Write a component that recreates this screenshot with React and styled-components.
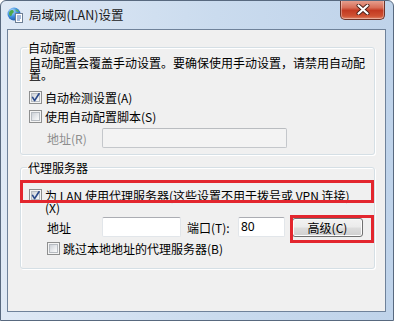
import React from 'react';
import styled, { createGlobalStyle } from 'styled-components';

const Global = createGlobalStyle`
  html, body { margin: 0; padding: 0; background: #ffffff; }
  body { font-family: "Noto Sans CJK SC", "Noto Sans", sans-serif; font-size: 12px; color: #000; }
`;

const Window = styled.div`
  width: 394px;
  height: 321px;
  box-sizing: border-box;
  border: 1px solid #58697f;
  border-radius: 6px 6px 0 0;
  background: linear-gradient(to right, #dfe9f5 0%, #cadbee 55%, #bfd3ea 100%);
  display: flex;
  flex-direction: column;
  overflow: hidden;
`;

const TitleBar = styled.div`
  height: 28px;
  flex: none;
  display: flex;
  align-items: flex-start;
`;

const AppIcon = styled.svg`
  margin: 6px 0 0 6px;
  width: 16px;
  height: 16px;
  flex: none;
`;

const Title = styled.div`
  margin: 6px 0 0 6px;
  font-size: 12.5px;
  line-height: 15px;
  color: #1a1a1a;
  white-space: nowrap;
`;

const CloseButton = styled.div`
  margin: -1px 8px 0 auto;
  width: 45px;
  height: 20px;
  box-sizing: border-box;
  border: 1px solid #6e3328;
  border-top: none;
  border-radius: 0 0 5px 5px;
  background: linear-gradient(#e8a595 0%, #d86e58 40%, #c33a22 55%, #cf5233 85%, #e0876c 100%);
  box-shadow: inset 0 0 0 1px rgba(255, 255, 255, 0.35);
  display: flex;
  align-items: center;
  justify-content: center;
`;

const Client = styled.div`
  flex: 1;
  margin: 0 7px 8px 6px;
  border: 1px solid #6f829a;
  background: #f0f0f0;
  position: relative;
  display: flex;
  flex-direction: column;
`;

const Group = styled.fieldset`
  margin: ${(p) => p.$top}px 0 0 12px;
  width: 355px;
  box-sizing: border-box;
  min-width: 0;
  border: 1px solid #d5dfe5;
  border-radius: 3px;
  box-shadow: inset 1px 1px 0 #ffffff, 1px 1px 0 #ffffff;
  padding: 0 8px ${(p) => p.$bottom}px 8px;
`;

const Caption = styled.legend`
  padding: 0 1px;
  margin-left: -2px;
  font-size: 12px;
  line-height: 13px;
`;

const Description = styled.div`
  margin-top: 3px;
  line-height: 12px;
`;

const CheckRow = styled.div`
  display: flex;
  align-items: flex-start;
  gap: 3px;
  margin-top: ${(p) => p.$top}px;
  padding-left: ${(p) => p.$indent || 0}px;
`;

const Box = styled.span`
  position: relative;
  width: 13px;
  height: 13px;
  box-sizing: border-box;
  flex: none;
  border: 1px solid #8e8f8f;
  background: #f4f4f4;
  padding: 1px;
  display: flex;
  &::before {
    content: '';
    flex: 1;
    border: 1px solid #b6bbc1;
    background: linear-gradient(135deg, #cdd1d7 0%, #eef0f2 70%, #fafafa 100%);
  }
`;

const Tick = styled.svg`
  position: absolute;
  left: 0;
  top: 0;
  width: 11px;
  height: 11px;
`;

const CheckText = styled.span`
  line-height: 12px;
  padding-top: 1px;
`;

const FieldRow = styled.div`
  display: flex;
  align-items: center;
  margin-top: ${(p) => p.$top}px;
  padding-left: 18px;
`;

const FieldLabel = styled.span`
  width: ${(p) => p.$w}px;
  margin-left: ${(p) => p.$ml || 0}px;
  flex: none;
  line-height: 13px;
  white-space: nowrap;
  color: ${(p) => (p.$disabled ? '#8d8d8d' : '#000')};
`;

const Input = styled.div`
  width: ${(p) => p.$w}px;
  height: 20px;
  box-sizing: border-box;
  flex: none;
  border: 1px solid ${(p) => (p.$disabled ? '#c4c7cb' : '#e2e6ea')};
  border-top-color: ${(p) => (p.$disabled ? '#b9bcc0' : '#abadb3')};
  border-radius: 2px;
  background: ${(p) => (p.$disabled ? '#f3f3f3' : '#ffffff')};
  font-family: "Noto Sans", sans-serif;
  font-size: 12px;
  line-height: 18px;
  padding-left: 2px;
`;

const Button = styled.div`
  margin-left: 7px;
  width: 71px;
  height: 19px;
  box-sizing: border-box;
  flex: none;
  border: 1px solid #707070;
  border-radius: 3px;
  background: linear-gradient(#f2f2f2 0%, #ebebeb 48%, #dddddd 52%, #cfcfcf 100%);
  box-shadow: inset 0 0 0 1px #fcfcfc;
  display: flex;
  align-items: center;
  justify-content: center;
  line-height: 13px;
`;

const Highlight = styled.div`
  position: absolute;
  left: ${(p) => p.$x}px;
  top: ${(p) => p.$y}px;
  width: ${(p) => p.$w}px;
  height: ${(p) => p.$h}px;
  box-sizing: border-box;
  border: 3px solid #e3262e;
  pointer-events: none;
`;

function Checkbox({ checked }) {
  return (
    <Box>
      {checked && (
        <Tick viewBox="0 0 11 11">
          <path d="M2.6 5.4 L4.6 8.6 L9 1.8" fill="none" stroke="#2c4a8a" strokeWidth="1.7" strokeLinejoin="round" strokeLinecap="round" />
        </Tick>
      )}
    </Box>
  );
}

export default function App() {
  return (
    <>
      <Global />
      <Window>
        <TitleBar>
          <AppIcon viewBox="0 0 16 16">
            <defs>
              <radialGradient id="globe" cx="0.35" cy="0.3" r="0.8">
                <stop offset="0" stopColor="#bfe3ff" />
                <stop offset="0.5" stopColor="#3d8fe0" />
                <stop offset="1" stopColor="#1a4f9a" />
              </radialGradient>
            </defs>
            <circle cx="7" cy="7" r="6.5" fill="url(#globe)" />
            <path d="M3 4 C4.5 2.5 6.5 3 6.8 4.6 C7 6 5.2 6.3 4.8 8 C4.4 9.6 2.6 9 2.2 7.4 C1.9 6 2.2 4.8 3 4 Z" fill="#4aa84a" />
            <path d="M8.5 2.2 C10 2.4 11.5 3.5 11.8 5 C10.8 5 9.6 4.6 8.8 3.8 Z" fill="#5cb85c" />
            <rect x="8.5" y="6.5" width="7" height="9" fill="#ffffff" stroke="#6d7f95" />
            <path d="M10 9 H14 M10 11 H14 M10 13 H13" stroke="#4d78b8" strokeWidth="1" />
          </AppIcon>
          <Title>局域网(LAN)设置</Title>
          <CloseButton>
            <svg width="14" height="11" viewBox="0 0 14 11">
              <path d="M2.5 1.5 L11.5 9.5 M11.5 1.5 L2.5 9.5" stroke="#4a1f18" strokeWidth="4" strokeLinecap="round" />
              <path d="M2.5 1.5 L11.5 9.5 M11.5 1.5 L2.5 9.5" stroke="#ffffff" strokeWidth="2.2" strokeLinecap="round" />
            </svg>
          </CloseButton>
        </TitleBar>
        <Client>
          <Group $top={11} $bottom={6}>
            <Caption>自动配置</Caption>
            <Description>
              自动配置会覆盖手动设置。要确保使用手动设置，请禁用自动配
              <br />
              置。
            </Description>
            <CheckRow $top={10}>
              <Checkbox checked />
              <CheckText>自动检测设置(A)</CheckText>
            </CheckRow>
            <CheckRow $top={6}>
              <Checkbox />
              <CheckText>使用自动配置脚本(S)</CheckText>
            </CheckRow>
            <FieldRow $top={5}>
              <FieldLabel $w={55} $disabled>地址(R)</FieldLabel>
              <Input $w={185} $disabled />
            </FieldRow>
          </Group>
          <Group $top={6} $bottom={13}>
            <Caption>代理服务器</Caption>
            <CheckRow $top={15}>
              <Checkbox checked />
              <CheckText>
                为 LAN 使用代理服务器(这些设置不用于拨号或 VPN 连接)
                <br />
                (X)
              </CheckText>
            </CheckRow>
            <FieldRow $top={3}>
              <FieldLabel $w={55}>地址</FieldLabel>
              <Input $w={79} />
              <FieldLabel $w={51} $ml={6}>端口(T):</FieldLabel>
              <Input $w={47}>80</Input>
              <Button>高级(C)</Button>
            </FieldRow>
            <CheckRow $top={5} $indent={18}>
              <Checkbox />
              <CheckText>跳过本地地址的代理服务器(B)</CheckText>
            </CheckRow>
          </Group>
          <Highlight $x={12} $y={150} $w={354} $h={23} />
          <Highlight $x={282} $y={185} $w={84} $h={28} />
        </Client>
      </Window>
    </>
  );
}
